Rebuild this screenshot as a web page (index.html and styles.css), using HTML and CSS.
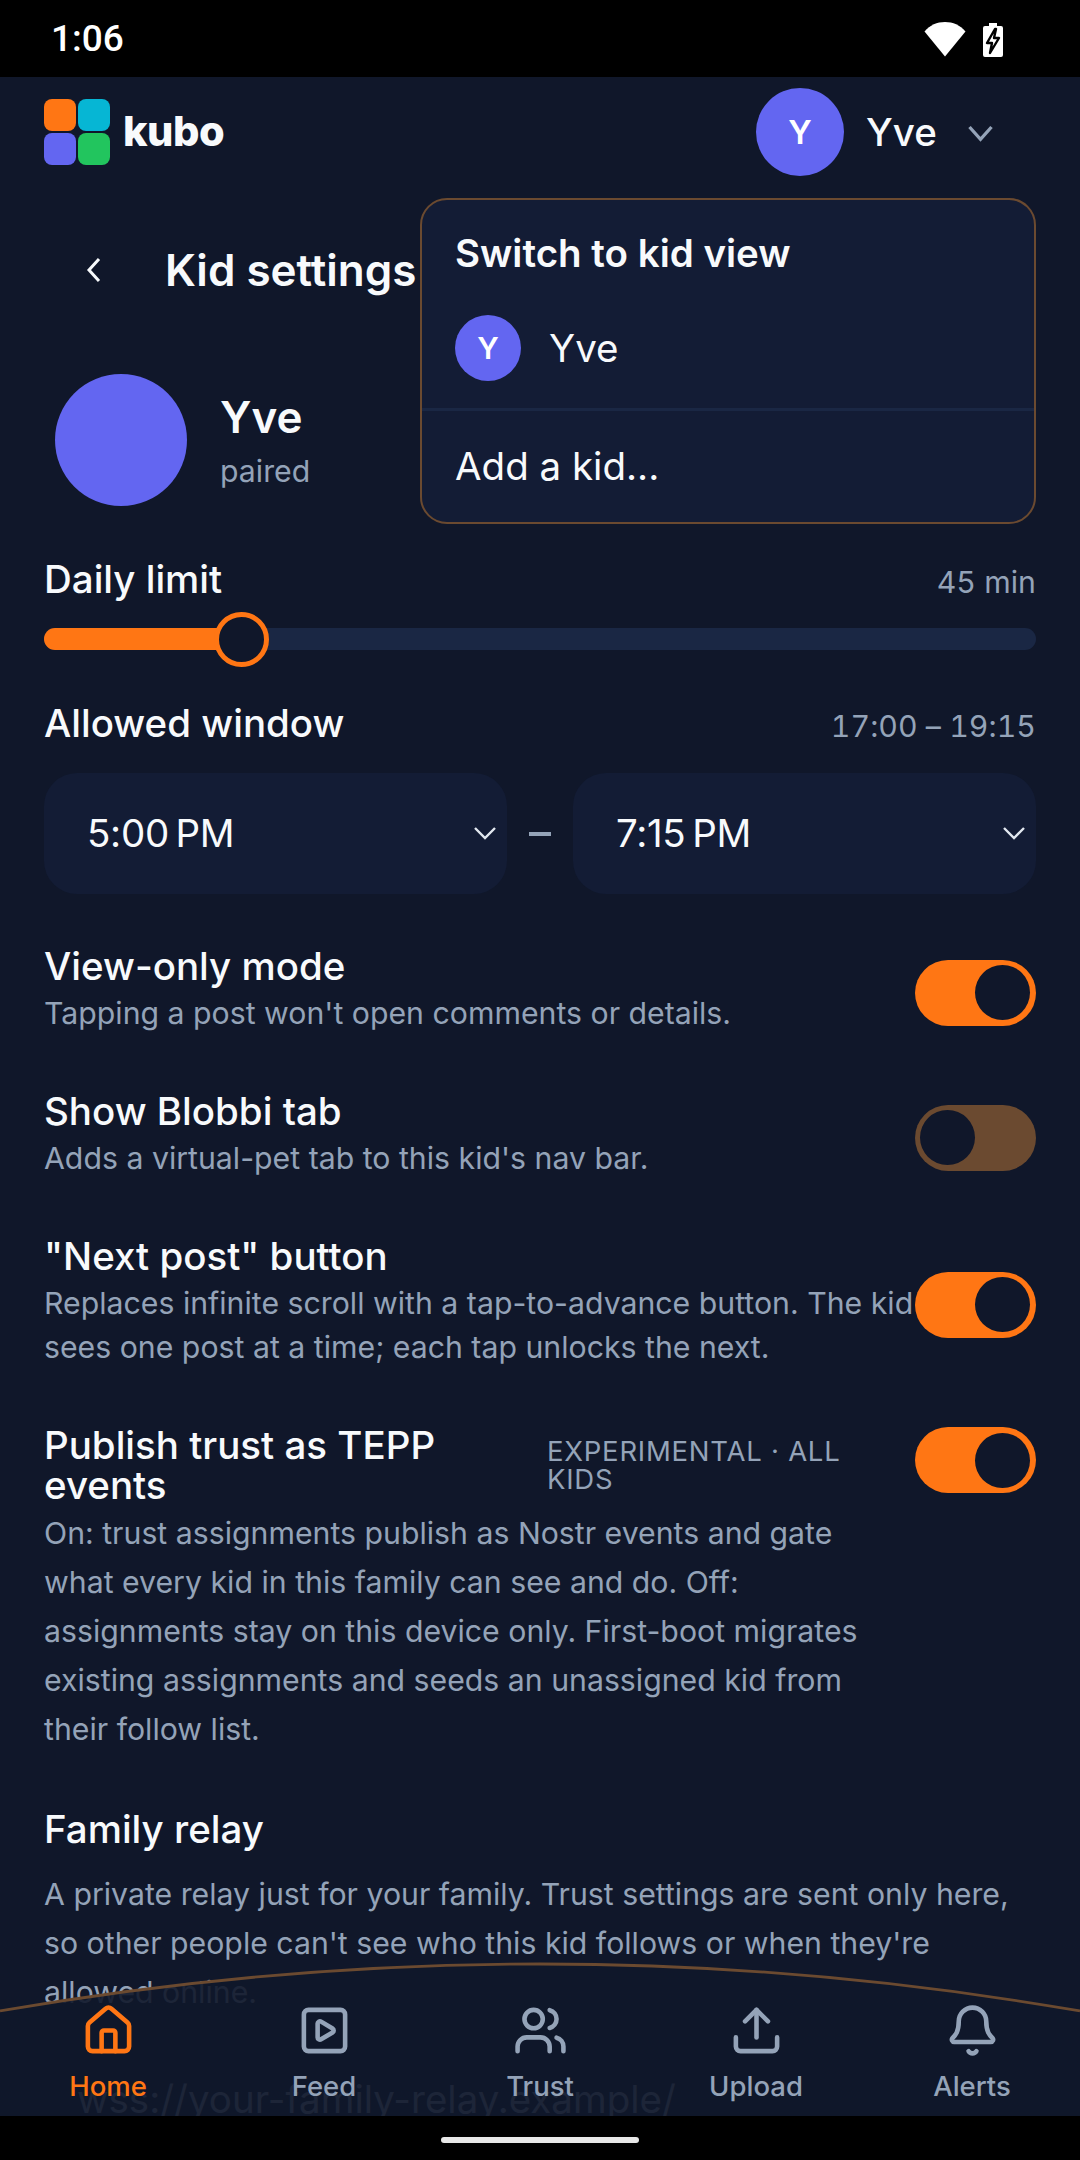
FILE: index.html
```html
<!DOCTYPE html>
<html lang="en">
<head>
    <meta charset="UTF-8">
    <meta name="viewport" content="width=device-width, initial-scale=1.0">
    <title>Kid settings</title>
    <link rel="stylesheet" href="styles.css">
</head>
<body>
    <div class="screen">
        <div class="status-bar">
            <span class="status-time">1:06</span>
            <div class="status-icons">
                <svg class="wifi-icon" viewBox="0 0 42 36"><path d="M0.5 10.5C6 4 13 1 21 1s15 3 20.5 9.5L21 35.5z" fill="#fff"/></svg>
                <svg class="battery-icon" viewBox="0 0 22 36"><path d="M7 1h8v3h4a2 2 0 0 1 2 2v27a2 2 0 0 1-2 2H3a2 2 0 0 1-2-2V6a2 2 0 0 1 2-2h4z" fill="#fff"/><path d="M13 7l-8 14h5l-2 10 9-15h-5l2-9z" fill="#fff" stroke="#000" stroke-width="2.4" stroke-linejoin="round"/></svg>
            </div>
        </div>

        <div class="app">
            <header class="top-bar">
                <div class="brand">
                    <div class="logo">
                        <span class="tile tile-orange"></span>
                        <span class="tile tile-cyan"></span>
                        <span class="tile tile-indigo"></span>
                        <span class="tile tile-green"></span>
                    </div>
                    <span class="brand-name">kubo</span>
                </div>
                <div class="kid-switch">
                    <span class="avatar avatar-md">Y</span>
                    <span class="kid-switch-name">Yve</span>
                    <svg class="kid-switch-chevron" viewBox="0 0 24 24"><path d="M4 8l8 9 8-9"/></svg>
                </div>
            </header>

            <main class="content">
                <div class="page-head">
                    <svg class="back-icon" viewBox="0 0 18 28"><path d="M14 3L4 14l10 11"/></svg>
                    <h1 class="page-title">Kid settings</h1>
                </div>

                <div class="profile">
                    <span class="avatar avatar-lg"></span>
                    <div>
                        <div class="profile-name">Yve</div>
                        <div class="profile-state">paired</div>
                    </div>
                </div>

                <div class="field-head field-limit">
                    <span class="field-label">Daily limit</span>
                    <span class="field-value">45 min</span>
                </div>
                <div class="slider">
                    <div class="slider-fill"></div>
                    <div class="slider-thumb"></div>
                </div>

                <div class="field-head field-window">
                    <span class="field-label">Allowed window</span>
                    <span class="field-value">17:00 – 19:15</span>
                </div>
                <div class="time-range">
                    <div class="time-select">
                        <span>5:00&#8201;PM</span>
                        <svg class="select-chevron" viewBox="0 0 24 14"><path d="M2 2l10 10L22 2"/></svg>
                    </div>
                    <span class="time-dash"></span>
                    <div class="time-select">
                        <span>7:15&#8201;PM</span>
                        <svg class="select-chevron" viewBox="0 0 24 14"><path d="M2 2l10 10L22 2"/></svg>
                    </div>
                </div>

                <div class="setting setting-first">
                    <div class="setting-text">
                        <div class="setting-title">View-only mode</div>
                        <div class="setting-sub">Tapping a post won't open comments or details.</div>
                    </div>
                    <div class="toggle on"><span class="knob"></span></div>
                </div>

                <div class="setting">
                    <div class="setting-text">
                        <div class="setting-title">Show Blobbi tab</div>
                        <div class="setting-sub">Adds a virtual-pet tab to this kid's nav bar.</div>
                    </div>
                    <div class="toggle off"><span class="knob"></span></div>
                </div>

                <div class="setting">
                    <div class="setting-text">
                        <div class="setting-title">"Next post" button</div>
                        <div class="setting-sub">Replaces infinite scroll with a tap-to-advance button. The kid sees one post at a time; each tap unlocks the next.</div>
                    </div>
                    <div class="toggle on"><span class="knob"></span></div>
                </div>

                <div class="setting-block">
                    <div class="setting setting-bare">
                        <div class="setting-title setting-title-wide">Publish trust as TEPP events</div>
                        <div class="setting-badge">EXPERIMENTAL · ALL KIDS</div>
                        <div class="toggle on toggle-top"><span class="knob"></span></div>
                    </div>
                    <p class="setting-desc setting-desc-narrow">On: trust assignments publish as Nostr events and gate what every kid in this family can see and do. Off: assignments stay on this device only. First-boot migrates existing assignments and seeds an unassigned kid from their follow list.</p>
                </div>

                <div class="relay">
                    <div class="setting-title">Family relay</div>
                    <p class="setting-desc relay-desc">A private relay just for your family. Trust settings are sent only here, so other people can't see who this kid follows or when they're allowed online.</p>
                    <div class="relay-input">wss://your-family-relay.example/</div>
                </div>
            </main>

            <!-- dropdown opened from the kid switcher -->
            <div class="kid-menu">
                <div class="kid-menu-title">Switch to kid view</div>
                <div class="kid-menu-item">
                    <span class="avatar avatar-sm">Y</span>
                    <span>Yve</span>
                </div>
                <div class="kid-menu-add">Add a kid...</div>
            </div>

            <nav class="bottom-nav">
                <svg class="nav-curve" viewBox="0 0 1080 160" preserveAspectRatio="none">
                    <path class="nav-curve-fill" d="M0 47Q540 -47 1080 47V160H0z"/>
                    <path class="nav-curve-line" d="M0 47Q540 -47 1080 47"/>
                </svg>
                <a class="nav-item active" href="#">
                    <svg viewBox="0 0 24 24"><path d="M15 21v-8a1 1 0 0 0-1-1h-4a1 1 0 0 0-1 1v8"/><path d="M3 10a2 2 0 0 1 .709-1.528l7-5.999a2 2 0 0 1 2.582 0l7 5.999A2 2 0 0 1 21 10v9a2 2 0 0 1-2 2H5a2 2 0 0 1-2-2z"/></svg>
                    <span>Home</span>
                </a>
                <a class="nav-item" href="#">
                    <svg viewBox="0 0 24 24"><rect x="3" y="3" width="18" height="18" rx="2"/><path d="M9 9.003a1 1 0 0 1 1.517-.859l4.997 2.997a1 1 0 0 1 0 1.718l-4.997 2.997A1 1 0 0 1 9 14.996z"/></svg>
                    <span>Feed</span>
                </a>
                <a class="nav-item" href="#">
                    <svg viewBox="0 0 24 24"><path d="M16 21v-2a4 4 0 0 0-4-4H6a4 4 0 0 0-4 4v2"/><circle cx="9" cy="7" r="4"/><path d="M22 21v-2a4 4 0 0 0-3-3.87"/><path d="M16 3.13a4 4 0 0 1 0 7.75"/></svg>
                    <span>Trust</span>
                </a>
                <a class="nav-item" href="#">
                    <svg viewBox="0 0 24 24"><path d="M21 15v4a2 2 0 0 1-2 2H5a2 2 0 0 1-2-2v-4"/><path d="M17 8l-5-5-5 5"/><path d="M12 3v12"/></svg>
                    <span>Upload</span>
                </a>
                <a class="nav-item" href="#">
                    <svg viewBox="0 0 24 24"><path d="M10.268 21a2 2 0 0 0 3.464 0"/><path d="M3.262 15.326A1 1 0 0 0 4 17h16a1 1 0 0 0 .74-1.673C19.41 13.956 18 12.499 18 8A6 6 0 0 0 6 8c0 4.499-1.411 5.956-2.738 7.326"/></svg>
                    <span>Alerts</span>
                </a>
            </nav>
        </div>

        <div class="gesture-bar"><span class="gesture-pill"></span></div>
    </div>
</body>
</html>
```

FILE: styles.css
```css
:root {
    --bg-color: #10172a;
    --panel-color: #131c35;
    --track-color: #1a2744;
    --text-color: #f8fafc;
    --muted-color: #94a3b8;
    --accent-color: #ff7614;
    --indigo-color: #6366f1;
    --line-color: #6b4a30;
}

* {
    margin: 0;
    padding: 0;
    box-sizing: border-box;
}

body {
    font-family: 'Inter', 'Liberation Sans', sans-serif;
    background-color: #000;
    color: var(--text-color);
}

.screen {
    width: 1080px;
    height: 2160px;
    display: flex;
    flex-direction: column;
    overflow: hidden;
}

/* status bar */
.status-bar {
    height: 77px;
    flex-shrink: 0;
    background-color: #000;
    display: flex;
    align-items: center;
    justify-content: space-between;
    padding: 0 76px 0 51px;
}

.status-time {
    font-family: 'Roboto', sans-serif;
    font-size: 37px;
    font-weight: 500;
    color: #fff;
}

.status-icons {
    display: flex;
    align-items: center;
    gap: 16px;
}

.wifi-icon {
    width: 42px;
    height: 36px;
}

.battery-icon {
    width: 22px;
    height: 36px;
    margin-top: 2px;
}

/* app */
.app {
    position: relative;
    flex-grow: 1;
    background-color: var(--bg-color);
    overflow: hidden;
}

.top-bar {
    height: 110px;
    display: flex;
    align-items: center;
    justify-content: space-between;
    padding: 0 44px;
}

.brand {
    display: flex;
    align-items: center;
    gap: 13px;
}

.logo {
    display: grid;
    grid-template-columns: 32px 32px;
    grid-auto-rows: 32px;
    gap: 2px;
}

.tile {
    border-radius: 8px;
}

.tile-orange { background-color: var(--accent-color); }
.tile-cyan { background-color: #06b6d4; }
.tile-indigo { background-color: var(--indigo-color); }
.tile-green { background-color: #22c55e; }

.brand-name {
    font-size: 41.5px;
    font-weight: 800;
    letter-spacing: -0.5px;
    line-height: 44px;
    margin-bottom: 3px;
}

.avatar {
    display: flex;
    align-items: center;
    justify-content: center;
    flex-shrink: 0;
    border-radius: 50%;
    background-color: var(--indigo-color);
    color: #fff;
    font-weight: 600;
}

.avatar-md {
    width: 88px;
    height: 88px;
    font-size: 33px;
}

.avatar-sm {
    width: 66px;
    height: 66px;
    font-size: 30.25px;
}

.avatar-lg {
    width: 132px;
    height: 132px;
}

.kid-switch {
    display: flex;
    align-items: center;
}

.kid-switch-name {
    font-size: 38.5px;
    font-weight: 500;
    margin-left: 22px;
    width: 98px;
}

.kid-switch-chevron {
    width: 33px;
    height: 33px;
    margin-right: 39px;
    fill: none;
    stroke: var(--muted-color);
    stroke-width: 2.4;
}

.content {
    padding: 0 44px;
}

.page-head {
    display: flex;
    align-items: center;
    height: 110px;
    margin-top: 28px;
}

.back-icon {
    width: 18px;
    height: 28px;
    margin-left: 41px;
    fill: none;
    stroke: var(--text-color);
    stroke-width: 3;
}

.page-title {
    font-size: 44px;
    font-weight: 600;
    margin-left: 62px;
    white-space: nowrap;
}

.profile {
    display: flex;
    align-items: center;
    gap: 33px;
    margin-top: 49px;
    padding-left: 11px;
}

.profile-name {
    font-size: 44px;
    font-weight: 600;
    line-height: 56px;
    margin-top: 2px;
}

.profile-state {
    font-size: 30.25px;
    color: var(--muted-color);
    line-height: 44px;
    margin-top: 4px;
}

.field-head {
    display: flex;
    align-items: center;
    justify-content: space-between;
}

.field-limit {
    margin-top: 50px;
    height: 46px;
}

.field-window {
    margin-top: 50px;
    height: 46px;
}

.field-label {
    font-size: 38.5px;
    font-weight: 500;
}

.field-value {
    padding-top: 5px;
    font-size: 30.25px;
    color: var(--muted-color);
    font-variant-numeric: tabular-nums;
    letter-spacing: 0.05px;
}

.slider {
    position: relative;
    height: 22px;
    margin-top: 26px;
    border-radius: 11px;
    background-color: var(--track-color);
}

.slider-fill {
    width: 198px;
    height: 100%;
    border-radius: 11px 0 0 11px;
    background-color: var(--accent-color);
}

/* thumb sits over the track */
.slider-thumb {
    position: absolute;
    left: 169.5px;
    top: -16.5px;
    width: 55px;
    height: 55px;
    border: 5.5px solid var(--accent-color);
    border-radius: 50%;
    background-color: var(--bg-color);
}

.time-range {
    display: flex;
    align-items: center;
    margin-top: 27px;
}

.time-select {
    flex: 1;
    height: 121px;
    display: flex;
    align-items: center;
    justify-content: space-between;
    padding: 0 10px 2px 43px;
    border-radius: 33px;
    background-color: var(--panel-color);
    font-size: 38.5px;
    letter-spacing: -0.3px;
}

.select-chevron {
    width: 24px;
    height: 14px;
    fill: none;
    stroke: #e2e8f0;
    stroke-width: 2.4;
}

.time-dash {
    width: 22px;
    height: 4px;
    margin: 0 22px;
    background-color: var(--muted-color);
}

.setting {
    display: flex;
    align-items: center;
    justify-content: space-between;
    margin-top: 52px;
}

.setting-first {
    margin-top: 52px;
}

.setting-bare {
    margin-top: 0;
    justify-content: flex-start;
}

.setting-block {
    margin-top: 52px;
}

.setting-text {
    flex: 1;
    min-width: 0;
    padding-bottom: 4px;
}

.setting-title {
    font-size: 38.5px;
    font-weight: 500;
    line-height: 40px;
}

.setting-title-wide {
    width: 490px;
    flex-shrink: 0;
}

.setting-badge {
    width: 305px;
    margin-left: 13px;
    font-size: 27.5px;
    line-height: 28px;
    letter-spacing: 0.75px;
    color: var(--muted-color);
}

.setting-sub {
    font-size: 30.25px;
    line-height: 44px;
    color: var(--muted-color);
    margin-top: 5px;
}

.setting-desc {
    font-size: 30.25px;
    line-height: 49px;
    color: var(--muted-color);
}

.setting-desc-narrow {
    margin-top: 4px;
    max-width: 840px;
}

.toggle {
    width: 121px;
    height: 66px;
    flex-shrink: 0;
    display: flex;
    align-items: center;
    padding: 0 6px 0 5px;
    border-radius: 33px;
}

.toggle.on {
    justify-content: flex-end;
    margin-left: auto;
    background-color: var(--accent-color);
}

.toggle.off {
    justify-content: flex-start;
    background-color: #6b4a30;
}

.toggle-top {
    align-self: flex-start;
    margin-top: 2px;
}

.knob {
    width: 55px;
    height: 55px;
    border-radius: 50%;
    background-color: var(--bg-color);
}

.relay {
    margin-top: 55px;
}

.relay-desc {
    margin-top: 21px;
}

.relay-input {
    margin-top: 58px;
    padding-left: 33px;
    font-size: 38.5px;
    line-height: 48px;
    color: var(--muted-color);
}

/* dropdown */
.kid-menu {
    position: absolute;
    left: 420px;
    top: 121px;
    width: 616px;
    height: 326px;
    border: 2px solid var(--line-color);
    border-radius: 27px;
    background-color: var(--panel-color);
}

.kid-menu-title {
    padding: 29px 33px 0;
    font-size: 38.5px;
    font-weight: 600;
    line-height: 48px;
}

.kid-menu-item {
    display: flex;
    align-items: center;
    gap: 28px;
    height: 123px;
    padding: 0 33px;
    margin-top: 11px;
    font-size: 38.5px;
    border-bottom: 3px solid var(--track-color);
}

.kid-menu-add {
    display: flex;
    align-items: center;
    height: 109px;
    padding: 0 33px;
    font-size: 38.5px;
}

/* bottom nav */
.bottom-nav {
    position: absolute;
    left: 0;
    right: 0;
    bottom: 0;
    height: 152px;
    display: grid;
    grid-template-columns: repeat(5, 1fr);
}

.nav-curve {
    position: absolute;
    left: 0;
    top: 0;
    width: 1080px;
    height: 160px;
    overflow: visible;
}

.nav-curve-fill {
    fill: rgba(16, 23, 42, 0.9);
}

.nav-curve-line {
    fill: none;
    stroke: var(--line-color);
    stroke-width: 2.75;
}

.nav-item {
    position: relative;
    display: flex;
    flex-direction: column;
    align-items: center;
    padding-top: 39px;
    color: var(--muted-color);
    text-decoration: none;
    font-size: 27.5px;
    font-weight: 500;
}

.nav-item svg {
    width: 55px;
    height: 55px;
    fill: none;
    stroke: currentColor;
    stroke-width: 2;
    stroke-linecap: round;
    stroke-linejoin: round;
}

.nav-item span {
    margin-top: 6px;
    line-height: 44px;
}

.nav-item.active {
    color: var(--accent-color);
}

.gesture-bar {
    height: 44px;
    flex-shrink: 0;
    background-color: #000;
    display: flex;
    justify-content: center;
    padding-top: 21px;
}

.gesture-pill {
    width: 198px;
    height: 6px;
    border-radius: 3px;
    background-color: #e8e8e8;
}
```
